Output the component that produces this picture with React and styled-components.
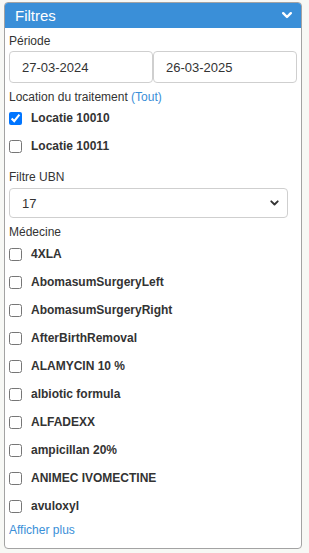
import styled, { createGlobalStyle } from 'styled-components';

const GlobalStyle = createGlobalStyle`
  body {
    margin: 0;
    background: #f7f8f5;
    font-family: 'Liberation Sans', Arial, sans-serif;
  }
`;

const Panel = styled.div`
  margin: 2px 0 0 4px;
  width: 296px;
  border: 1px solid #a3a3a3;
  border-radius: 4px;
  background: #fff;
  overflow: hidden;
`;

const Header = styled.div`
  display: flex;
  align-items: center;
  justify-content: space-between;
  height: 25px;
  padding: 0 9px 0 10px;
  background: #3a8fd8;
  color: #fff;
  font-size: 15px;
`;

const Body = styled.div`
  padding: 6px 4px 11px 4px;
  color: #333;
`;

const Label = styled.div`
  font-size: 12px;
  line-height: 14px;
  margin-top: ${p => p.$top || 0}px;
  margin-bottom: ${p => p.$bottom || 0}px;
`;

const Link = styled.span`
  color: #3a8fd8;
`;

const DateRow = styled.div`
  display: grid;
  grid-template-columns: 144px 144px;
`;

const DateInput = styled.input`
  box-sizing: border-box;
  height: 32px;
  width: 100%;
  padding: 0 12px;
  border: 1px solid #cfcfcf;
  border-radius: 4px;
  font-family: inherit;
  font-size: 13px;
  color: #333;
`;

const CheckRow = styled.label`
  display: flex;
  align-items: center;
  height: 28px;
  font-size: 12px;
  font-weight: bold;
  color: #333;

  input {
    margin: 0 9px 0 0;
    width: 13px;
    height: 13px;
  }
`;

const SelectWrap = styled.div`
  position: relative;
  width: 279px;
`;

const Select = styled.select`
  box-sizing: border-box;
  appearance: none;
  width: 100%;
  height: 30px;
  padding: 0 12px;
  border: 1px solid #cfcfcf;
  border-radius: 4px;
  background: #fff;
  font-family: inherit;
  font-size: 13px;
  color: #333;
`;

const Chevron = styled.svg`
  position: absolute;
  right: 9px;
  top: 12px;
  pointer-events: none;
`;

const More = styled.div`
  margin-top: 3px;
  font-size: 12px;
  line-height: 14px;
  color: #3a8fd8;
`;

const medicines = [
  '4XLA',
  'AbomasumSurgeryLeft',
  'AbomasumSurgeryRight',
  'AfterBirthRemoval',
  'ALAMYCIN 10 %',
  'albiotic formula',
  'ALFADEXX',
  'ampicillan 20%',
  'ANIMEC IVOMECTINE',
  'avuloxyl',
];

export default function App() {
  return (
    <>
      <GlobalStyle />
      <Panel>
        <Header>
          <span>Filtres</span>
          <svg width="10" height="7" viewBox="0 0 10 7">
            <path d="M1.2 1.2 L5 5 L8.8 1.2" fill="none" stroke="#fff" strokeWidth="2.4" strokeLinecap="round" strokeLinejoin="round" />
          </svg>
        </Header>
        <Body>
          <Label $bottom={3}>Période</Label>
          <DateRow>
            <DateInput defaultValue="27-03-2024" />
            <DateInput defaultValue="26-03-2025" />
          </DateRow>
          <Label $top={7}>
            Location du traitement <Link>(Tout)</Link>
          </Label>
          <CheckRow>
            <input type="checkbox" defaultChecked />
            Locatie 10010
          </CheckRow>
          <CheckRow>
            <input type="checkbox" />
            Locatie 10011
          </CheckRow>
          <Label $top={10} $bottom={4}>Filtre UBN</Label>
          <SelectWrap>
            <Select defaultValue="17">
              <option value="17">17</option>
            </Select>
            <Chevron width="9" height="6" viewBox="0 0 9 6">
              <path d="M1.3 1.3 L4.5 4.5 L7.7 1.3" fill="none" stroke="#333" strokeWidth="1.9" strokeLinecap="round" strokeLinejoin="round" />
            </Chevron>
          </SelectWrap>
          <Label $top={7} $bottom={1}>Médecine</Label>
          {medicines.map(m => (
            <CheckRow key={m}>
              <input type="checkbox" />
              {m}
            </CheckRow>
          ))}
          <More>Afficher plus</More>
        </Body>
      </Panel>
    </>
  );
}
